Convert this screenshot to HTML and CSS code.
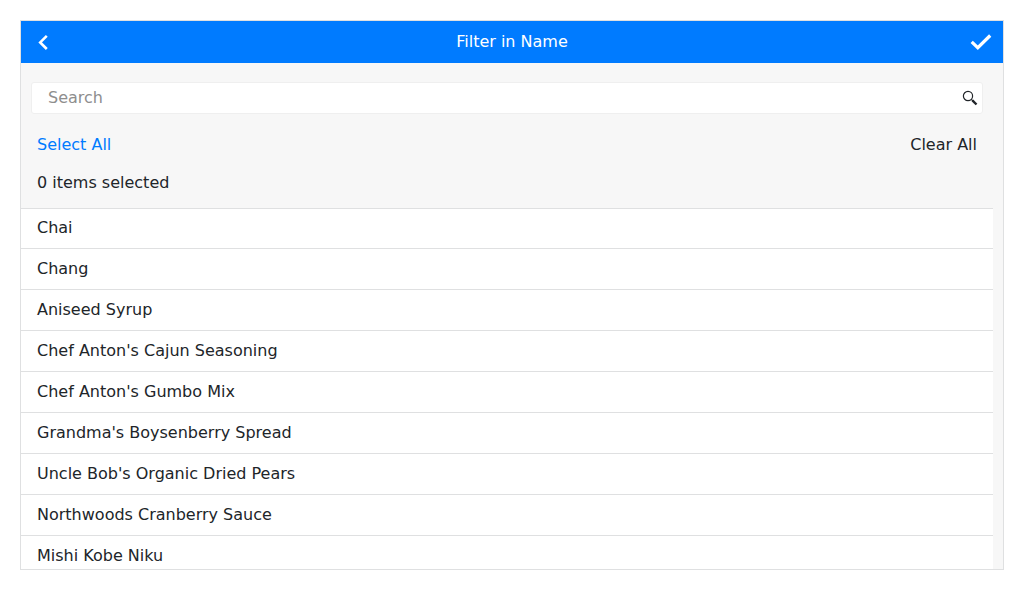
FILE: index.html
```html
<!DOCTYPE html>
<html lang="en">
<head>
<meta charset="utf-8">
<meta name="viewport" content="width=device-width, initial-scale=1">
<title>Filter in Name</title>
<link rel="stylesheet" href="styles.css">
</head>
<body>
<main class="panel">
  <header class="bar">
    <button class="bar-button" type="button" aria-label="Back">
      <svg width="24" height="24" viewBox="0 0 24 24" fill="none" stroke="currentColor" stroke-width="2.6"><path d="M15.8 5.8 9.2 12.4l6.6 6.6"/></svg>
    </button>
    <h1 class="bar-title">Filter in Name</h1>
    <button class="bar-button" type="button" aria-label="Apply">
      <svg width="24" height="24" viewBox="0 0 24 24" fill="none" stroke="currentColor" stroke-width="3.2"><path d="m2.7 11.9 6.1 5.8L21.2 5.5"/></svg>
    </button>
  </header>
  <section class="tools">
    <div class="search">
      <input class="search-input" type="text" placeholder="Search" aria-label="Search">
      <svg class="search-icon" width="16" height="16" viewBox="0 0 16 16" fill="none" stroke="currentColor"><circle cx="6" cy="6" r="4.6" stroke-width="1.2"/><path d="m9.3 9.3 2 2" stroke-width="1.2"/><path d="m10.4 10.4 4.1 4.1" stroke-width="2.4"/></svg>
    </div>
    <div class="actions">
      <button class="link-button link-primary" type="button">Select All</button>
      <button class="link-button" type="button">Clear All</button>
    </div>
    <p class="count">0 items selected</p>
  </section>
  <ul class="items">
    <li class="item">Chai</li>
    <li class="item">Chang</li>
    <li class="item">Aniseed Syrup</li>
    <li class="item">Chef Anton's Cajun Seasoning</li>
    <li class="item">Chef Anton's Gumbo Mix</li>
    <li class="item">Grandma's Boysenberry Spread</li>
    <li class="item">Uncle Bob's Organic Dried Pears</li>
    <li class="item">Northwoods Cranberry Sauce</li>
    <li class="item">Mishi Kobe Niku</li>
  </ul>
</main>
</body>
</html>
```
FILE: styles.css
```css
* {
  box-sizing: border-box;
}

body {
  margin: 0;
  padding: 20px;
  height: 100vh;
  background: #fff;
  color: #212529;
  font: 16px/24px "DejaVu Sans", sans-serif;
}

button,
input {
  font: inherit;
  color: inherit;
}

.panel {
  display: flex;
  flex-direction: column;
  height: 100%;
  overflow: hidden;
  border: 1px solid #dfe0e1;
  background: #f7f7f7;
}

.bar {
  display: flex;
  flex: none;
  align-items: center;
  justify-content: space-between;
  padding: 9px 10px;
  background: #007bff;
  color: #fff;
}

.bar-title {
  margin: 0;
  font-size: 16px;
  font-weight: 400;
}

.bar-button {
  display: flex;
  padding: 0;
  border: 0;
  background: none;
}

.tools {
  flex: none;
  padding: 19px 20px 13px 10px;
}

.search {
  display: flex;
  align-items: center;
  padding-right: 4px;
  border: 1px solid #efefef;
  border-radius: 3px;
  background: #fff;
}

.search-input {
  flex: 1;
  min-width: 0;
  height: 30px;
  padding: 0 16px 2px;
  border: 0;
  background: none;
}

.search-input::placeholder {
  color: #8e8e8e;
}

.search-icon {
  flex: none;
}

.actions {
  display: flex;
  justify-content: space-between;
  padding: 19px 6px 14px;
}

.link-button {
  padding: 0;
  border: 0;
  background: none;
}

.link-primary {
  color: #007bff;
}

.count {
  margin: 0;
  padding: 0 6px;
}

.items {
  flex: 1;
  min-height: 0;
  margin: 0 10px 0 0;
  padding: 0;
  overflow: hidden;
  list-style: none;
  background: #fff;
}

.item {
  padding: 8px 16px;
  border-top: 1px solid #dfe0e1;
}

.item:first-child {
  padding: 7px 16px 8px;
}
```
